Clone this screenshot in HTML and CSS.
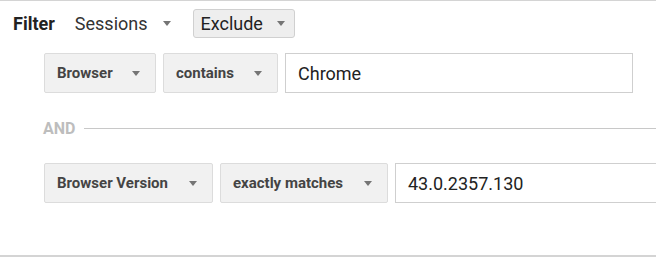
FILE: index.html
```html
<!DOCTYPE html>
<html lang="en">
<head>
    <meta charset="UTF-8">
    <title>Filter</title>
    <link rel="stylesheet" href="styles.css">
</head>
<body>
    <div class="panel">
        <div class="head">
            <span class="title">Filter</span>
            <span class="plain">Sessions <i class="caret"></i></span>
            <span class="mode">Exclude <i class="caret"></i></span>
        </div>
        <div class="rule">
            <span class="pick w1">Browser <i class="caret"></i></span>
            <span class="pick w2">contains <i class="caret"></i></span>
            <span class="field w3">Chrome</span>
        </div>
        <div class="and"><span>AND</span><hr></div>
        <div class="rule">
            <span class="pick w4">Browser Version <i class="caret"></i></span>
            <span class="pick w5">exactly matches <i class="caret"></i></span>
            <span class="field w6">43.0.2357.130</span>
        </div>
    </div>
</body>
</html>
```

FILE: styles.css
```css
body { margin: 0; background: #fff; font-family: Roboto, "Liberation Sans", sans-serif; overflow: hidden; }
.panel { width: 656px; height: 254px; border-top: 1px solid #d4d4d4; border-bottom: 2px solid #d4d4d4; box-sizing: content-box; }
.head { display: flex; align-items: center; height: 29px; margin-top: 8px; padding-left: 13px; font-size: 18px; color: #222; }
.title { font-weight: bold; margin-right: 20px; }
.plain { display: flex; align-items: center; gap: 15px; color: #333; margin-right: 22px; }
.mode { display: flex; align-items: center; gap: 14px; height: 29px; padding: 0 9px 0 7px; background: #eeeeee; border: 1px solid #d0d0d0; border-radius: 3px; box-sizing: border-box; }
.caret { display: inline-block; width: 0; height: 0; border-left: 4px solid transparent; border-right: 4px solid transparent; border-top: 5px solid #757575; }
.rule { display: flex; gap: 7px; padding-left: 44px; margin-top: 15px; }
.rule + .and + .rule { margin-top: 0; }
.pick { display: flex; align-items: center; justify-content: space-between; flex-shrink: 0; white-space: nowrap; height: 40px; padding: 0 15px 0 12px; background: #f1f1f1; border: 1px solid #dcdcdc; border-radius: 2px; box-sizing: border-box; font-size: 15px; font-weight: bold; color: #444; }
.field { display: flex; align-items: center; flex-shrink: 0; height: 40px; padding: 0 12px; border: 1px solid #cfcfcf; box-sizing: border-box; font-size: 18px; color: #222; }
.w1 { width: 112px; }
.w2 { width: 115px; }
.w3 { width: 348px; }
.w4 { width: 169px; }
.w5 { width: 168px; }
.w6 { flex: 1; border-right: none; }
.and { display: flex; align-items: center; height: 70px; padding-left: 43px; font-size: 16px; font-weight: bold; color: #bdbdbd; }
.and hr { flex: 1; margin: 0 0 0 9px; border: none; border-top: 1px solid #c8c8c8; }
```
